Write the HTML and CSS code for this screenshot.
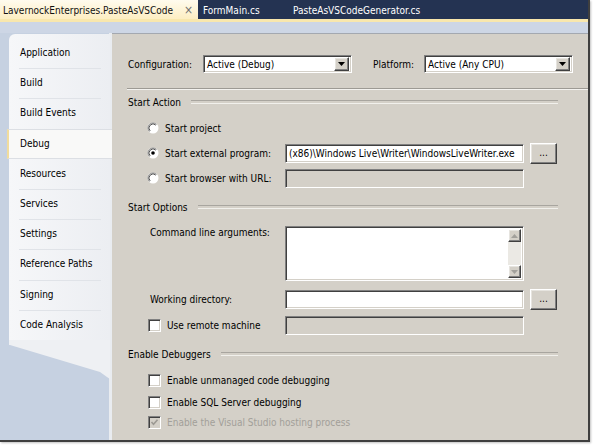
FILE: index.html
```html
<!DOCTYPE html>
<html>
<head>
<meta charset="utf-8">
<title>Project Properties - Debug</title>
<link rel="stylesheet" href="styles.css">
</head>
<body>
<div class="frame">
  <div class="tabs">
    <div class="tab active"><span>LavernockEnterprises.PasteAsVSCode</span><span class="close">×</span></div>
    <div class="tab second">FormMain.cs</div>
    <div class="tab">PasteAsVSCodeGenerator.cs</div>
  </div>
  <div class="tabline"></div>
  <div class="band"></div>
  <div class="body">
    <nav class="nav">
      <div class="navpanel">
        <div class="item first">Application</div>
        <div class="item">Build</div>
        <div class="item">Build Events</div>
        <div class="item sel">Debug</div>
        <div class="item nosep">Resources</div>
        <div class="item">Services</div>
        <div class="item">Settings</div>
        <div class="item">Reference Paths</div>
        <div class="item">Signing</div>
        <div class="item">Code Analysis</div>
      </div>
      <div class="flap"></div>
    </nav>
    <main class="content">
      <div class="config">
        <span class="lbl1">Configuration:</span>
        <div class="combo"><span class="ctext">Active (Debug)</span><span class="drop"><svg width="7" height="4" viewBox="0 0 7 4"><polygon points="0,0 7,0 3.5,4" fill="#000"/></svg></span></div>
        <span class="lbl2">Platform:</span>
        <div class="combo"><span class="ctext">Active (Any CPU)</span><span class="drop"><svg width="7" height="4" viewBox="0 0 7 4"><polygon points="0,0 7,0 3.5,4" fill="#000"/></svg></span></div>
      </div>
      <div class="rule"></div>

      <div class="sect s1">Start Action</div>
      <div class="row r1">
        <div class="lab"><svg class="radio" width="12" height="12" viewBox="0 0 12 12"><circle cx="6" cy="6" r="5.5" fill="#fff"/><path d="M2.46 9.54A5 5 0 0 1 9.54 2.46" fill="none" stroke="#8a8a8a"/><path d="M3.17 8.83A4 4 0 0 1 8.83 3.17" fill="none" stroke="#555"/></svg><span>Start project</span></div>
      </div>
      <div class="row r2">
        <div class="lab"><svg class="radio" width="12" height="12" viewBox="0 0 12 12"><circle cx="6" cy="6" r="5.5" fill="#fff"/><path d="M2.46 9.54A5 5 0 0 1 9.54 2.46" fill="none" stroke="#8a8a8a"/><path d="M3.17 8.83A4 4 0 0 1 8.83 3.17" fill="none" stroke="#555"/><circle cx="6" cy="6" r="1.8" fill="#000"/></svg><span>Start external program:</span></div>
        <div class="tb"><span class="path">(x86)\Windows Live\Writer\WindowsLiveWriter.exe</span></div>
        <div class="btn">...</div>
      </div>
      <div class="row r2">
        <div class="lab"><svg class="radio" width="12" height="12" viewBox="0 0 12 12"><circle cx="6" cy="6" r="5.5" fill="#fff"/><path d="M2.46 9.54A5 5 0 0 1 9.54 2.46" fill="none" stroke="#8a8a8a"/><path d="M3.17 8.83A4 4 0 0 1 8.83 3.17" fill="none" stroke="#555"/></svg><span>Start browser with URL:</span></div>
        <div class="tb off"></div>
      </div>

      <div class="sect s2">Start Options</div>
      <div class="row tall">
        <div class="lab plain top">Command line arguments:</div>
        <div class="ta">
          <div class="sb">
            <div class="sbtn"><svg width="7" height="4" viewBox="0 0 7 4"><polygon points="0,4 7,4 3.5,0" fill="#a2a09b"/></svg></div>
            <div class="sbtn"><svg width="7" height="4" viewBox="0 0 7 4"><polygon points="0,0 7,0 3.5,4" fill="#a2a09b"/></svg></div>
          </div>
        </div>
      </div>
      <div class="row r3">
        <div class="lab plain">Working directory:</div>
        <div class="tb"></div>
        <div class="btn">...</div>
      </div>
      <div class="row r4">
        <div class="lab chk"><span class="box"></span><span>Use remote machine</span></div>
        <div class="tb off"></div>
      </div>

      <div class="sect s3">Enable Debuggers</div>
      <div class="row cb c1">
        <div class="lab chk wide"><span class="box"></span><span>Enable unmanaged code debugging</span></div>
      </div>
      <div class="row cb c2">
        <div class="lab chk wide"><span class="box"></span><span>Enable SQL Server debugging</span></div>
      </div>
      <div class="row cb c3">
        <div class="lab chk wide dis"><span class="box checked"><svg width="9" height="9" viewBox="0 0 9 9"><polyline points="1.5,4 3.5,6.2 7.5,1.8" fill="none" stroke="#9c9993" stroke-width="1.6"/></svg></span><span>Enable the Visual Studio hosting process</span></div>
      </div>
    </main>
  </div>
</div>
</body>
</html>
```
FILE: styles.css
```css
* { box-sizing: border-box; }
html, body { margin: 0; padding: 0; }
body {
  background: #fff;
  font-family: "DejaVu Sans Condensed", "DejaVu Sans", sans-serif;
  font-size: 10px;
  color: #000;
  width: 593px;
  height: 446px;
  overflow: hidden;
}
.frame {
  width: 590px;
  height: 442px;
  border-right: 2px solid #3f3f3f;
  border-bottom: 2px solid #3f3f3f;
  display: flex;
  flex-direction: column;
  box-shadow: 1px 1px 2px rgba(0,0,0,0.25);
}
.tabs {
  height: 19px;
  flex: none;
  background: #243352;
  display: flex;
  color: #fff;
}
.tab {
  height: 19px;
  display: flex;
  align-items: center;
  padding: 1px 0 0 5px;
  white-space: nowrap;
}
.tab.active {
  width: 198px;
  padding-left: 3px;
  background: linear-gradient(#fffbee, #fdeec2);
  color: #111;
}
.close { margin-left: auto; margin-right: 5px; color: #707070; font-size: 12px; }
.tab.second { width: 90px; }
.tabline { height: 3px; flex: none; background: #f8e7ad; }
.band { height: 11px; flex: none; background: #cdd6e5; }
.body { flex: 1; display: flex; min-height: 0; }

.nav {
  width: 112px;
  flex: none;
  background: #c6d1e1;
  box-shadow: inset -3px 0 0 #e9ecf0;
  padding-top: 1px;
}
.navpanel {
  margin-left: 9px;
  width: 101px;
  background: linear-gradient(90deg, #f6f7f9, #eceef2);
  border-radius: 6px 0 0 0;
  padding-top: 4px;
}
.item {
  height: 30.2px;
  line-height: 30px;
  padding-left: 11px;
  white-space: nowrap;
  background: linear-gradient(#e0e3e8, #e0e3e8) no-repeat 10px 0 / 82px 1px;
}
.item.first, .item.nosep { background: none; }
.item.sel {
  margin-left: -2px;
  margin-right: -2px;
  padding-left: 11px;
  line-height: 28px;
  background: #f9f9f8;
  border-left: 2px solid #f1dc9c;
  border-top: 1px solid #dcdfe4;
  border-bottom: 1px solid #dcdfe4;
}
.flap {
  margin-left: 9px;
  width: 101px;
  height: 39px;
  background: #eef0f3;
  clip-path: polygon(0 0, 101px 0, 101px 39px, 98px 37px, 91px 32px, 1px 5px, 0 5px);
}

.content {
  flex: 1;
  background: #d4d0c8;
  border-top: 1px solid #a3a8b0;
  padding-left: 16px;
  display: flex;
  flex-direction: column;
}
.config { margin-top: 21px; height: 18px; display: flex; align-items: center; flex: none; }
.lbl1 { width: 75px; }
.lbl2 { width: 51px; margin-left: 21px; }

.combo, .tb, .ta, .box {
  border: 1px solid;
  border-color: #808080 #ffffff #ffffff #808080;
  box-shadow: inset 1px 1px 0 #404040, inset -1px -1px 0 #d4d0c8;
}
.combo {
  width: 149px;
  height: 18px;
  display: flex;
  align-items: center;
  background: #fff;
  padding: 2px;
}
.ctext { padding-left: 1px; }
.drop, .sbtn, .btn {
  border: 1px solid;
  border-color: #ffffff #404040 #404040 #ffffff;
  box-shadow: inset -1px -1px 0 #808080, inset 1px 1px 0 #e6e4df;
  background: #d4d0c8;
  display: flex;
  align-items: center;
  justify-content: center;
}
.drop { margin-left: auto; width: 15px; height: 14px; }

.rule {
  margin-top: 15px;
  margin-left: -1px;
  height: 2px;
  flex: none;
  border-top: 1px solid #9d9a94;
  border-bottom: 1px solid #f3f2ef;
}
.sect {
  height: 14px;
  width: 430px;
  flex: none;
  display: flex;
  align-items: center;
  gap: 10px;
  white-space: nowrap;
}
.sect::after {
  content: "";
  flex: 1;
  height: 2px;
  border-top: 1px solid #a8a59f;
  border-bottom: 1px solid #f1f0ec;
}
.s1 { margin-top: 5px; }
.s2 { margin-top: 12px; }
.s3 { margin-top: 12px; }

.row { height: 20px; flex: none; display: flex; align-items: center; }
.r1 { margin-top: 9px; }
.r2 { margin-top: 5px; }
.r3 { margin-top: 8px; }
.r4 { margin-top: 6px; }
.tall { height: 55px; margin-top: 12px; align-items: flex-start; }
.lab {
  width: 157px;
  flex: none;
  padding-left: 19px;
  display: flex;
  align-items: center;
  gap: 6px;
  white-space: nowrap;
}
.lab.plain { padding-left: 22px; }
.lab.top { line-height: 13px; }
.lab.chk { padding-left: 20px; gap: 6px; }
.lab.wide { width: 400px; }
.radio { flex: none; }
.box { width: 13px; height: 13px; background: #fff; flex: none; display: flex; align-items: center; justify-content: center; }
.box.checked { background: #d4d0c8; }
.dis { color: #a29f99; }

.tb {
  width: 239px;
  height: 19px;
  background: #fff;
  overflow: hidden;
  display: flex;
  align-items: center;
  padding-left: 3px;
  white-space: nowrap;
}
.tb.off { background: #d4d0c8; }
.path { letter-spacing: 0; }
.btn { width: 27px; height: 21px; margin-left: 6px; align-items: flex-end; padding-bottom: 5px; }
.ta {
  width: 239px;
  height: 55px;
  background: #fff;
  display: flex;
  justify-content: flex-end;
  padding: 2px;
}
.sb {
  width: 13px;
  display: flex;
  flex-direction: column;
  justify-content: space-between;
  background: #ebe9e4;
}
.sbtn { width: 13px; height: 13px; }
.c1 { margin-top: 10px; height: 18px; }
.c2 { margin-top: 4px; height: 18px; }
.c3 { margin-top: 2px; height: 18px; }
```
